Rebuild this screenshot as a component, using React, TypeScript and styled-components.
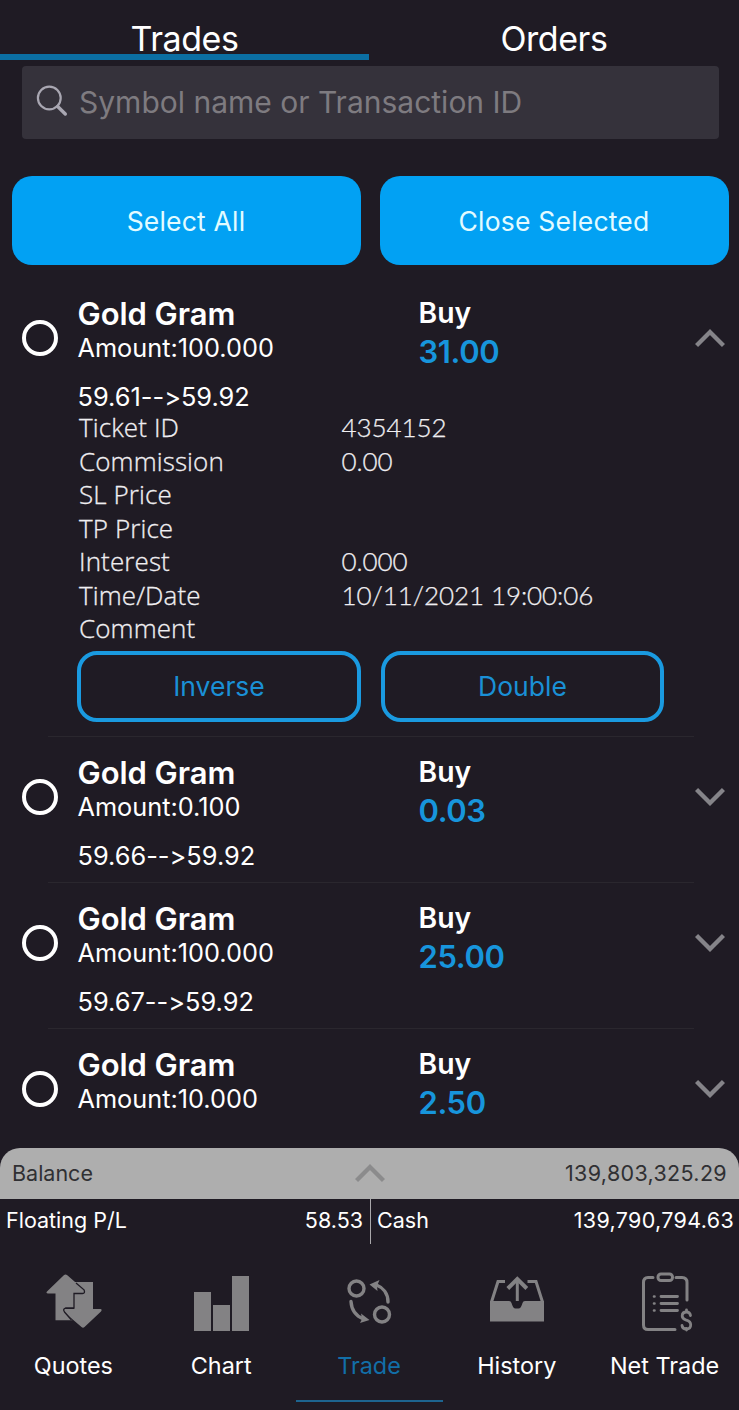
import React from "react";
import styled, { createGlobalStyle } from "styled-components";

const GlobalStyle = createGlobalStyle`
  * { box-sizing: border-box; }
  body {
    margin: 0;
    background: #1f1b24;
    color: #fff;
    font-family: Inter, "Liberation Sans", sans-serif;
    font-feature-settings: "calt" 0;
  }
  button { font: inherit; color: inherit; background: none; border: 0; padding: 0; margin: 0; }
`;

const Screen = styled.div`
  width: 739px;
  height: 1410px;
  display: flex;
  flex-direction: column;
  overflow: hidden;
  white-space: nowrap;
`;

const Tabs = styled.nav`
  display: grid;
  grid-template-columns: 369px 370px;
  height: 60px;
`;

const Tab = styled.button<{ $active?: boolean }>`
  display: flex;
  justify-content: center;
  height: 60px;
  padding-top: 19px;
  border-bottom: 6px solid ${(p) => (p.$active ? "#0b6fa3" : "transparent")};
  font-size: 34px;
  line-height: 39px;
  letter-spacing: -0.45px;
`;

const SearchBox = styled.label`
  display: flex;
  align-items: center;
  gap: 10px;
  height: 73px;
  margin: 6px 20px 0 22px;
  padding: 0 0 2px 14px;
  border-radius: 4px;
  background: #35323b;
  color: #7e7b80;
  font-size: 30px;
  line-height: 40px;
`;

const BulkActions = styled.div`
  display: grid;
  grid-template-columns: 349px 349px;
  gap: 19px;
  margin: 37px 0 13px 12px;
`;

const BulkButton = styled.button`
  height: 89px;
  padding-right: 1px;
  border-radius: 20px;
  background: #02a1f3;
  color: #e2fbff;
  font-size: 26.5px;
  letter-spacing: 0.2px;
`;

const TradeList = styled.main`
  height: 870px;
  overflow: hidden;
`;

const TradeRow = styled.article`
  display: grid;
  grid-template-columns: 78px 341px 1fr 59px;
  height: 134px;
`;

const TradeItem = styled.section`
  padding-bottom: 12px;
  background: linear-gradient(#2a272e, #2a272e) 48px 100% / 646px 1px no-repeat;
`;

const Radio = styled.span`
  width: 36px;
  height: 36px;
  margin: 42px 0 0 21.5px;
  border: 4px solid #fff;
  border-radius: 50%;
`;

const Title = styled.div`
  margin: 16px 0 0 -0.5px;
  font-size: 31px;
  font-weight: 600;
  line-height: 40px;
  letter-spacing: -0.05px;
`;

const Amount = styled.div`
  margin-left: -0.5px;
  font-size: 25.3px;
  line-height: 28px;
`;

const PriceMove = styled.div`
  margin: 21px 0 0 -0.5px;
  font-size: 25.4px;
  line-height: 28px;
`;

const Side = styled.div`
  margin: 16px 0 0 -0.5px;
  font-size: 28.3px;
  font-weight: 600;
  line-height: 38px;
`;

const Profit = styled.div`
  margin-left: -0.5px;
  font-size: 31px;
  font-weight: 600;
  line-height: 40px;
  letter-spacing: -0.4px;
  color: #1795dc;
`;

const ChevronBox = styled.div`
  padding: 50px 0 0 15px;
  height: 80px;
`;

const Details = styled.dl`
  display: grid;
  grid-template-columns: 262.5px 1fr;
  grid-auto-rows: 33.5px;
  margin: 0 0 0 79px;
  height: 238.5px;
`;

const DetailLabel = styled.dt`
  font: 300 26px/30px "Open Sans", "Noto Sans", sans-serif;
  letter-spacing: 0.1px;
  color: #f0eff2;
  -webkit-text-stroke: 0.3px #f0eff2;
`;

const DetailValue = styled.dd`
  margin: 0;
  font: 300 26px/30px Lato, "Noto Sans", sans-serif;
  letter-spacing: -0.08px;
  color: #f0eff2;
  -webkit-text-stroke: 0.25px #f0eff2;
`;

const RowActions = styled.div`
  display: grid;
  grid-template-columns: 284px 283px;
  gap: 20px;
  margin: 0 0 3.5px 77px;
`;

const OutlineButton = styled.button`
  height: 71px;
  border: 4px solid #1a9ae0;
  border-radius: 20px;
  color: #1a90d6;
  font-size: 26.5px;
`;

const Footer = styled.footer`
  flex: 1;
`;

const BalanceBar = styled.div`
  display: grid;
  grid-template-columns: 1fr 30px 1fr;
  align-items: center;
  height: 51px;
  padding: 0 12px 2px;
  border-radius: 20px 20px 0 0;
  background: #aeaeae;
  color: #303033;
  font-size: 21.5px;
`;

const Total = styled.span`
  text-align: right;
  letter-spacing: 0.33px;
`;

const Summary = styled.div`
  display: grid;
  grid-template-columns: 371px 368px;
  height: 45px;
  font-size: 21.5px;
  line-height: 42px;
`;

const SummaryCell = styled.div<{ $divided?: boolean }>`
  display: flex;
  justify-content: space-between;
  padding: 0 ${(p) => (p.$divided ? 7 : 5)}px 0 6px;
  border-right: ${(p) => (p.$divided ? "1px solid #a9a8ab" : "0")};
`;

const BottomNav = styled.nav`
  display: grid;
  grid-template-columns: repeat(5, 1fr);
  height: 158px;
`;

const NavItem = styled.button<{ $active?: boolean }>`
  display: flex;
  flex-direction: column;
  align-items: center;
  padding: 27px 1px 0 0;
  border-bottom: 2px solid ${(p) => (p.$active ? "#1d648f" : "transparent")};
  color: ${(p) => (p.$active ? "#126fa8" : "#fff")};
  font-size: 23.4px;
  line-height: 30px;

  svg { display: block; margin-bottom: 16px; }
`;

const SearchIcon = () => (
  <svg width="33" height="33" viewBox="0 0 33 33" fill="none" stroke="#a9a7b2" strokeLinecap="round">
    <circle cx="13.3" cy="13" r="11.4" strokeWidth="2.2" />
    <path d="M21.7 21.5 29.3 29" strokeWidth="3.4" />
  </svg>
);

const Chevron = ({ up, color = "#858489" }: { up?: boolean; color?: string }) => (
  <svg width="30" height="20" viewBox="0 0 30 20" fill="none" stroke={color} strokeWidth="4.4">
    <path d={up ? "M1.5 17.5 15 4 28.5 17.5" : "M1.5 2.5 15 16 28.5 2.5"} />
  </svg>
);

const GREY = "#838284";

const QuotesIcon = () => (
  <svg width="64" height="64" viewBox="-1 0 64 64" fill={GREY}>
    <path d="M32 11H51V38H58.5Q60.5 38.5 59 40.5L42.500 56Q41 57.3 39.5 56L22 41Q20.5 38 23 38H32Z" />
    <path d="M5 20.5 21.8 4.3Q23.5 2.8 25.3 4.3L42 18.8Q43.5 22.5 40.5 22.5H32V37H23.5Q20.5 38 22.5 41L30.5 49.3H13.5V22.5H6Q3.5 22 5 20.5Z" />
    <path
      d="M34 12 42 18.8Q43.5 22.5 40.5 22.5H32V37H23.5Q20.5 38 22.5 41L29.5 49"
      fill="none"
      stroke="#1f1b24"
      strokeWidth="1.3"
    />
  </svg>
);

const ChartIcon = () => (
  <svg width="64" height="64" viewBox="0 0 64 64" fill={GREY}>
    <path d="M5 21h17v39H5zM24 34h17v26H24zM43 5h17v55H43z" />
  </svg>
);

const TradeIcon = () => (
  <svg width="64" height="64" viewBox="0.5 0 64 64" fill="none" stroke={GREY} strokeWidth="3.4">
    <circle cx="20" cy="17.5" r="7.5" />
    <circle cx="45.5" cy="43.5" r="7.5" />
    <path d="M14.5 30.5C15 39 19.5 45 27 48" strokeLinecap="round" />
    <path d="M51.5 31C51.5 22.5 46.5 16.5 40 14" strokeLinecap="round" />
    <path d="m24.5 42.5 8.5 6.5-9.5 3 2-4z" fill={GREY} stroke="none" />
    <path d="m43 9-10 4.500L41 20l-.5-5z" fill={GREY} stroke="none" />
  </svg>
);

const HistoryIcon = () => (
  <svg width="64" height="64" viewBox="0.5 0 64 64" fill="none" stroke={GREY}>
    <path d="M5.5 30h19q2 0 2.5 2 1.5 5.5 4 5.5h3q2.5 0 4-5.5.5-2 2.5-2h19V50.500h-54z" fill={GREY} stroke="none" />
    <path d="M7 31 13.5 10.5h7M43 10.5h8.5L58 31" strokeWidth="3" />
    <path d="M32.8 30V8" strokeWidth="3" />
    <path d="m23.3 17.5 9.5-9.5 9.500 9.5" strokeWidth="4" />
  </svg>
);

const NetTradeIcon = () => (
  <svg width="64" height="64" viewBox="0 0 64 64" fill="none" stroke={GREY} strokeWidth="3" strokeLinecap="round">
    <path d="M20 6.500h-5q-4.500 0-4.500 5v42.500q0 4.500 4.500 4.500h27" />
    <rect x="25" y="3" width="14.500" height="6.500" rx="3" />
    <path d="M43 6.500h6q5 0 5 5v17.500" />
    <path d="M28 25.500h16.500M28 32.500h16.500M28 39.500h16.500" strokeWidth="2.800" />
    <path d="M21 25.500h.5M21 32.500h.5M21 39.500h.5" strokeWidth="2.600" />
    <path d="M57.500 44.500q-.5-3.500-4-3.500-4.300 0-4.300 4 0 2.700 4.200 4.200 4.300 1.300 4.300 4.500 0 4.300-4.300 4.300-4 0-4.400-3.500M53.500 39v2M53.500 57.500v1.500" strokeWidth="2.800" />
  </svg>
);

const details = [
  ["Ticket ID", "4354152"],
  ["Commission", "0.00"],
  ["SL Price", ""],
  ["TP Price", ""],
  ["Interest", "0.000"],
  ["Time/Date", "10/11/2021 19:00:06"],
  ["Comment", ""],
];

const trades = [
  { amount: "100.000", move: "59.61-->59.92", profit: "31.00", open: true },
  { amount: "0.100", move: "59.66-->59.92", profit: "0.03" },
  { amount: "100.000", move: "59.67-->59.92", profit: "25.00" },
  { amount: "10.000", move: "", profit: "2.50" },
];

const navItems = [
  { label: "Quotes", Icon: QuotesIcon },
  { label: "Chart", Icon: ChartIcon },
  { label: "Trade", Icon: TradeIcon, active: true },
  { label: "History", Icon: HistoryIcon },
  { label: "Net Trade", Icon: NetTradeIcon },
];

export default function App() {
  return (
    <Screen>
      <GlobalStyle />
      <Tabs>
        <Tab $active>Trades</Tab>
        <Tab>Orders</Tab>
      </Tabs>
      <SearchBox>
        <SearchIcon />
        <span>Symbol name or Transaction ID</span>
      </SearchBox>
      <BulkActions>
        <BulkButton>Select All</BulkButton>
        <BulkButton>Close Selected</BulkButton>
      </BulkActions>
      <TradeList>
        {trades.map((t, i) => (
          <TradeItem key={i}>
            <TradeRow>
              <Radio />
              <div>
                <Title>Gold Gram</Title>
                <Amount>Amount:{t.amount}</Amount>
                <PriceMove>{t.move}</PriceMove>
              </div>
              <div>
                <Side>Buy</Side>
                <Profit>{t.profit}</Profit>
              </div>
              <ChevronBox>
                <Chevron up={t.open} />
              </ChevronBox>
            </TradeRow>
            {t.open && (
              <>
                <Details>
                  {details.map(([label, value]) => (
                    <React.Fragment key={label}>
                      <DetailLabel>{label}</DetailLabel>
                      <DetailValue>{value}</DetailValue>
                    </React.Fragment>
                  ))}
                </Details>
                <RowActions>
                  <OutlineButton>Inverse</OutlineButton>
                  <OutlineButton>Double</OutlineButton>
                </RowActions>
              </>
            )}
          </TradeItem>
        ))}
      </TradeList>
      <Footer>
        <BalanceBar>
          <span>Balance</span>
          <Chevron up color="#8b8b8c" />
          <Total>139,803,325.29</Total>
        </BalanceBar>
        <Summary>
          <SummaryCell $divided>
            <span>Floating P/L</span>
            <span>58.53</span>
          </SummaryCell>
          <SummaryCell>
            <span>Cash</span>
            <Total>139,790,794.63</Total>
          </SummaryCell>
        </Summary>
        <BottomNav>
          {navItems.map(({ label, Icon, active }) => (
            <NavItem key={label} $active={active}>
              <Icon />
              {label}
            </NavItem>
          ))}
        </BottomNav>
      </Footer>
    </Screen>
  );
}
